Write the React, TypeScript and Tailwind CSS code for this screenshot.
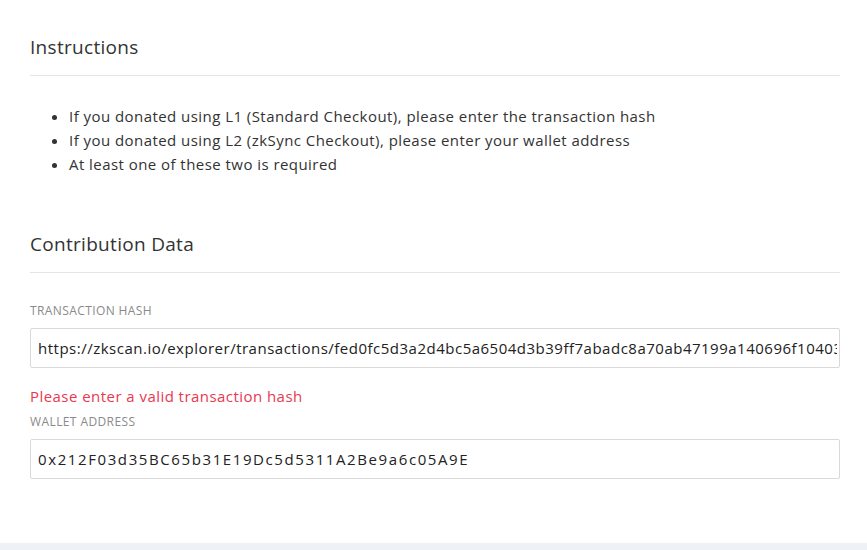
import React from "react";

const font = { fontFamily: '"Open Sans", "Lato", sans-serif' };

export default function App() {
  return (
    <div className="min-h-[550px] bg-[#eef2f6] text-[#333]" style={font}>
      <div className="bg-white px-[30px] pt-[34px] pb-[64px] pr-[27px]">
        <h2 className="text-[19px] leading-[26px] font-normal tracking-[0.3px] text-[#333]">Instructions</h2>
        <div className="mt-[15px] border-t border-[#e5e5e5]" />
        <ul className="mt-[28px] list-disc pl-[39px] text-[15px] leading-[24px] tracking-[0.45px] text-[#333]">
          <li>If you donated using L1 (Standard Checkout), please enter the transaction hash</li>
          <li>If you donated using L2 (zkSync Checkout), please enter your wallet address</li>
          <li>At least one of these two is required</li>
        </ul>

        <h2 className="mt-[55px] text-[19px] leading-[26px] font-normal tracking-[0.3px] text-[#333]">Contribution Data</h2>
        <div className="mt-[15px] border-t border-[#e5e5e5]" />

        <label className="mt-[30px] block text-[12px] leading-[16px] uppercase tracking-[0.4px] text-[#8a8a8a]">Transaction hash</label>
        <input
          readOnly
          value="https://zkscan.io/explorer/transactions/fed0fc5d3a2d4bc5a6504d3b39ff7abadc8a70ab47199a140696f104033"
          className="mt-[9px] block h-[40px] w-full rounded-[2px] border border-[#d9d9d9] pl-[7px] pr-[2px] text-[15px] tracking-[0.5px] text-[#222] outline-none"
          style={font}
        />
        <div className="mt-[19px] text-[15px] leading-[18px] tracking-[0.45px] text-[#e8394f]">Please enter a valid transaction hash</div>
        <label className="mt-[9px] block text-[12px] leading-[16px] uppercase tracking-[0.4px] text-[#8a8a8a]">Wallet address</label>
        <input
          readOnly
          value="0x212F03d35BC65b31E19Dc5d5311A2Be9a6c05A9E"
          className="mt-[9px] block h-[40px] w-full rounded-[2px] border border-[#d9d9d9] pl-[7px] pr-[2px] text-[15px] tracking-[1.6px] text-[#222] outline-none"
          style={font}
        />
      </div>
    </div>
  );
}
